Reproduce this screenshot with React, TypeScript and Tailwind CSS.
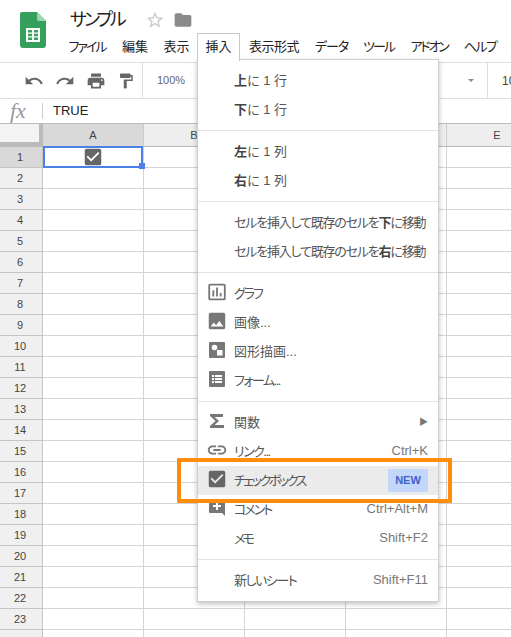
import type { ReactNode } from "react";
import { MdUndo, MdRedo, MdPrint, MdFormatPaint, MdFolder, MdStarBorder, MdLink, MdCheckBox, MdPhoto, MdInsertChartOutlined } from "react-icons/md";

const rows = Array.from({ length: 24 }, (_, i) => i + 1);
const columns = ["A", "B", "C", "D", "E"];

function SheetsLogo() {
  return (
    <svg width="26" height="36" viewBox="0 0 26 36">
      <path d="M2 0h15l9 9v24a3 3 0 0 1-3 3H3a3 3 0 0 1-3-3V2a2 2 0 0 1 2-2z" fill="#34a05c" />
      <path d="M17 0l9 9h-7a2 2 0 0 1-2-2z" fill="#9ed3b3" />
      <path d="M6 16h14v14H6z" fill="#fff" />
      <path d="M8 18h4v2.5H8zM14 18h4v2.5h-4zM8 21.800h4v2.5H8zM14 21.800h4v2.5h-4zM8 25.600h4v2.5H8zM14 25.600h4v2.5h-4z" fill="#34a05c" />
    </svg>
  );
}

function MenuTab({ label, active, className }: { label: string; active?: boolean; className?: string }) {
  if (active) {
    return (
      <div className="relative z-30 flex h-[28px] w-[43px] items-center justify-center border border-b-0 border-[#c8c8c8] bg-white pb-[2px]">
        {label}
      </div>
    );
  }
  return <div className={`flex h-[27px] items-center justify-center whitespace-nowrap ${className}`}>{label}</div>;
}

function MenuItem({ icon, shortcut, children, extra, highlight, className }: { icon?: ReactNode; shortcut?: string; children: ReactNode; extra?: ReactNode; highlight?: boolean; className?: string }) {
  return (
    <div className={`flex h-[29px] items-center text-[13px] text-[#555] ${highlight ? "bg-[#ebebeb]" : ""}`}>
      <div className="flex w-[36px] shrink-0 items-center justify-center pb-[3px] pl-[1px]">{icon}</div>
      <div className={`flex-1 whitespace-nowrap [font-feature-settings:'palt'] ${className ?? ""}`}>{children}</div>
      {shortcut && <div className="pr-[10px] pb-[2px] text-[#777]">{shortcut}</div>}
      {extra}
    </div>
  );
}

function Separator() {
  return <div className="h-px bg-[#e2e2e2]" />;
}

function Group({ children }: { children: ReactNode }) {
  return <div className="py-[6px]">{children}</div>;
}

function DrawingIcon() {
  return (
    <svg width="16" height="16" viewBox="0 0 16 16">
      <rect width="16" height="16" rx="1" fill="#777" />
      <circle cx="5.500" cy="5.500" r="2.800" fill="#fff" />
      <rect x="8" y="8" width="5.500" height="5.500" fill="#fff" />
    </svg>
  );
}

function FormIcon() {
  return (
    <svg width="16" height="16" viewBox="0 0 16 16">
      <rect width="16" height="16" rx="1" fill="#777" />
      <path d="M3 4h2v2H3zM6 4h7v2H6zM3 7h2v2H3zM6 7h7v2H6zM3 10h2v2H3zM6 10h7v2H6z" fill="#fff" />
    </svg>
  );
}

function CommentIcon() {
  return (
    <svg width="16" height="18" viewBox="0 0 16 18">
      <path d="M1 0h14a1 1 0 0 1 1 1v16l-3-3H1a1 1 0 0 1-1-1V1a1 1 0 0 1 1-1z" fill="#777" />
      <path d="M7 3h2v3h3v2H9v3H7V8H4V6h3z" fill="#fff" />
    </svg>
  );
}

function SigmaIcon() {
  return (
    <svg width="14" height="14" viewBox="0 0 14 14">
      <path d="M0 0h13v3H4.500L9 7l-4.500 4H14v3H0v-2l5.500-5L0 2z" fill="#777" />
    </svg>
  );
}

function InsertMenu() {
  return (
    <div className="absolute left-[197px] top-[59px] z-20 w-[242px] border border-[#cfcfcf] bg-white shadow-[0_2px_5px_rgba(0,0,0,0.25)]">
      <Group>
        <MenuItem><b className="font-bold text-[#444]">上</b>に 1 行</MenuItem>
        <MenuItem><b className="font-bold text-[#444]">下</b>に 1 行</MenuItem>
      </Group>
      <Separator />
      <Group>
        <MenuItem><b className="font-bold text-[#444]">左</b>に 1 列</MenuItem>
        <MenuItem><b className="font-bold text-[#444]">右</b>に 1 列</MenuItem>
      </Group>
      <Separator />
      <Group>
        <MenuItem className="tracking-[-1.200px]">セルを挿入して既存のセルを<b className="font-bold text-[#444]">下</b>に移動</MenuItem>
        <MenuItem className="tracking-[-1.200px]">セルを挿入して既存のセルを<b className="font-bold text-[#444]">右</b>に移動</MenuItem>
      </Group>
      <Separator />
      <Group>
        <MenuItem className="tracking-[-2px]" icon={<MdInsertChartOutlined size={22} color="#777" />}>グラフ</MenuItem>
        <MenuItem icon={<MdPhoto size={22} color="#777" />}>画像...</MenuItem>
        <MenuItem icon={<DrawingIcon />}>図形描画...</MenuItem>
        <MenuItem className="tracking-[-1.500px]" icon={<FormIcon />}>フォーム...</MenuItem>
      </Group>
      <Separator />
      <Group>
        <MenuItem
          icon={<SigmaIcon />}
          extra={<span className="pr-[10px] text-[9px] text-[#777]">▶</span>}
        >
          関数
        </MenuItem>
        <MenuItem className="tracking-[-1.500px]" icon={<MdLink size={22} color="#777" />} shortcut="Ctrl+K">リンク...</MenuItem>
        <MenuItem
          highlight
          className="tracking-[-2.400px]"
          icon={<MdCheckBox size={22} color="#666" />}
          extra={<span className="mr-[10px] flex h-[23px] w-[40px] items-center justify-center rounded-[2px] bg-[#c3d7fb] text-[11px] font-bold text-[#3f5fc9]">NEW</span>}
        >
          チェックボックス
        </MenuItem>
        <MenuItem className="tracking-[-2px]" icon={<CommentIcon />} shortcut="Ctrl+Alt+M">コメント</MenuItem>
        <MenuItem className="tracking-[-3px]" shortcut="Shift+F2">メモ</MenuItem>
      </Group>
      <Separator />
      <Group>
        <MenuItem className="tracking-[-1.500px]" shortcut="Shift+F11">新しいシート</MenuItem>
      </Group>
    </div>
  );
}

export default function App() {
  return (
    <div className="relative h-[637px] w-[511px] overflow-hidden bg-white font-['Liberation_Sans','Noto_Sans_CJK_JP',sans-serif] text-[#222]">
      {/* title bar */}
      <div className="flex h-[62px]">
        <div className="w-[68px] shrink-0 pl-[20px] pt-[12px]">
          <SheetsLogo />
        </div>
        <div className="flex-1">
          <div className="flex h-[33px] items-center pl-[2px] pt-[7px]">
            <span className="w-[75px] text-[18px] tracking-[-3px] [font-feature-settings:'palt']">サンプル</span>
            <MdStarBorder size={20} color="#c8c8c8" />
            <MdFolder size={20} color="#8a8a8a" className="ml-[8px]" />
          </div>
          <div className="-ml-[8px] flex text-[13px] [font-feature-settings:'palt']">
            <MenuTab label="ファイル" className="w-[54px] tracking-[-2px]" />
            <MenuTab label="編集" className="w-[42px]" />
            <MenuTab label="表示" className="w-[41px]" />
            <MenuTab label="挿入" active />
            <MenuTab label="表示形式" className="w-[68px] tracking-[-0.500px]" />
            <MenuTab label="データ" className="w-[47px] tracking-[-1px]" />
            <MenuTab label="ツール" className="w-[47px] tracking-[-2px]" />
            <MenuTab label="アドオン" className="w-[54px] tracking-[-2.200px]" />
            <MenuTab label="ヘルプ" className="w-[48px] tracking-[-1.500px]" />
          </div>
        </div>
      </div>

      {/* toolbar */}
      <div className="flex h-[37px] items-center border-y border-[#dedede] text-[#666]">
        <div className="flex h-full w-[143px] items-center gap-[11px] border-r border-[#dedede] pl-[24px]">
          <MdUndo size={20} />
          <MdRedo size={20} />
          <MdPrint size={20} />
          <MdFormatPaint size={18} />
        </div>
        <div className="w-[60px] pl-[14px] text-[11px]">100%</div>
        <div className="flex-1" />
        <div className="mr-[13px] h-0 w-0 border-x-[3px] border-t-[3px] border-x-transparent border-t-[#888]" />
        <div className="flex h-full w-[24px] items-center whitespace-nowrap border-l border-[#dedede] pl-[14px] text-[12px] text-[#5a4020]">10</div>
      </div>

      {/* formula bar */}
      <div className="flex h-[24px] items-center">
        <div className="w-[42px] pl-[10px] pb-[1px] font-['Liberation_Serif',serif] text-[22px] italic leading-none text-[#999]">fx</div>
        <div className="h-[16px] w-px bg-[#ccc]" />
        <div className="pl-[10px] text-[13px]">TRUE</div>
      </div>

      {/* column header */}
      <div className="flex h-[24px] border-y border-[#bbb] bg-[#eee] text-[11px] text-[#444]">
        <div className="w-[43px] shrink-0 border-b-[4px] border-r-[4px] border-[#bbb] bg-[#f3f3f3]" />
        {columns.map((c) => (
          <div key={c} className={`flex w-[101px] shrink-0 items-center justify-center border-r border-[#ccc] ${c === "A" ? "bg-[#d9d9d9]" : ""}`}>
            {c}
          </div>
        ))}
      </div>

      {/* grid */}
      {rows.map((r) => (
        <div key={r} className="flex h-[21px]">
          <div className={`flex w-[43px] shrink-0 items-center justify-center border-b border-r border-[#c4c4c4] pr-[2px] text-[11px] text-[#444] ${r === 1 ? "bg-[#d9d9d9]" : "bg-[#f0f0f0]"}`}>
            {r < 24 && r}
          </div>
          {columns.map((c) => (
            <div key={c} className="relative w-[101px] shrink-0 border-b border-r border-[#d4d4d4]">
              {r === 1 && c === "A" && (
                <div className="absolute inset-x-0 -top-px bottom-[-1px] z-10 flex items-center justify-center border-2 border-[#4a80e8]">
                  <MdCheckBox size={22} color="#666" />
                  <div className="absolute bottom-[-3px] right-[-4px] h-[6px] w-[6px] bg-[#4a80e8]" />
                </div>
              )}
            </div>
          ))}
        </div>
      ))}

      <InsertMenu />

      {/* orange callout */}
      <div className="absolute left-[177px] top-[458px] z-40 h-[45px] w-[275px] border-4 border-[#ff8c0a]" />
    </div>
  );
}
